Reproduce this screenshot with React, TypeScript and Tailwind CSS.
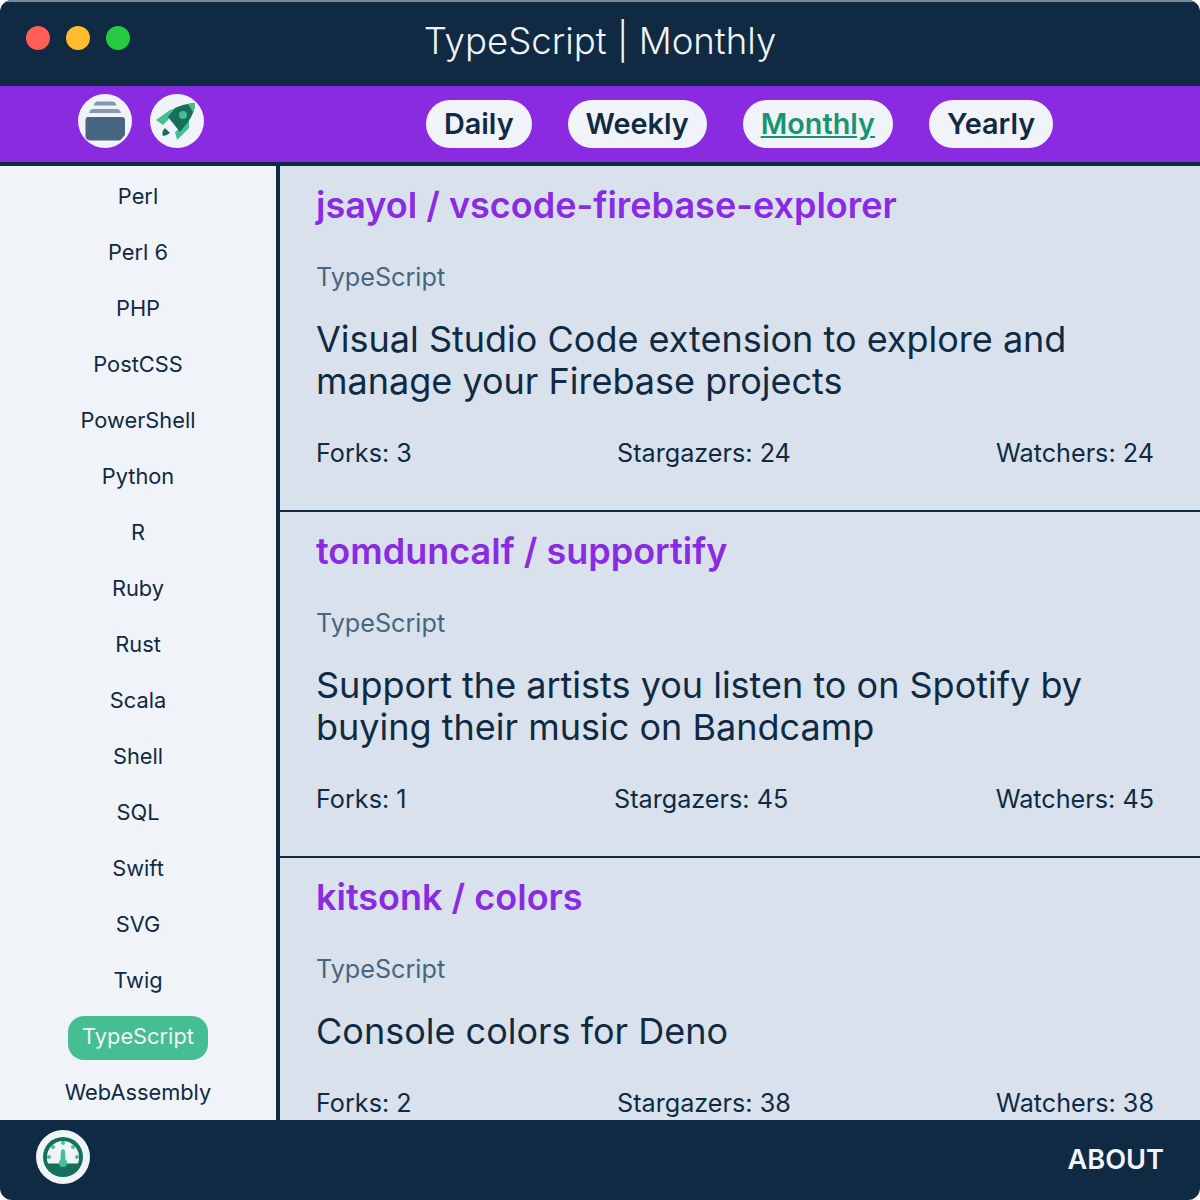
import React from 'react';

const languages = ['Perl', 'Perl 6', 'PHP', 'PostCSS', 'PowerShell', 'Python', 'R', 'Ruby', 'Rust', 'Scala', 'Shell', 'SQL', 'Swift', 'SVG', 'Twig', 'TypeScript', 'WebAssembly'];

const repos = [
  { name: 'jsayol / vscode-firebase-explorer', desc: 'Visual Studio Code extension to explore and manage your Firebase projects', forks: 3, stars: 24, watchers: 24 },
  { name: 'tomduncalf / supportify', desc: 'Support the artists you listen to on Spotify by buying their music on Bandcamp', forks: 1, stars: 45, watchers: 45 },
  { name: 'kitsonk / colors', desc: 'Console colors for Deno', forks: 2, stars: 38, watchers: 38 },
];

const periods = ['Daily', 'Weekly', 'Monthly', 'Yearly'];

function ArchiveIcon() {
  return (
    <svg width="54" height="54" viewBox="0 0 54 54">
      <circle cx="27" cy="27" r="27" fill="#F0F4F8" />
      <path d="M15.5 11.5 Q16.5 7.5 20 7.5 H34 Q37.5 7.5 38.5 11.5 Z" fill="#829AB1" />
      <path d="M11 19 Q12 15 15 15 H39 Q42 15 43 19 Z" fill="#829AB1" />
      <path d="M10 23 H44 Q47 23 47 26 V41 L42 46.5 H12 Q7.5 46 7.5 42 V26 Q7.5 23 10 23 Z" fill="#486581" />
    </svg>
  );
}

function RocketIcon() {
  return (
    <svg width="54" height="54" viewBox="0 0 54 54">
      <circle cx="27" cy="27" r="27" fill="#F0F4F8" />
      <path d="M6 26 L20 16 L27 14 L18 26 L13 31 Z" fill="#45BE93" />
      <path d="M39 26 L39 34 L27 46 L25 38 L31 33 Z" fill="#45BE93" />
      <path d="M18 23 L25 14 Q33 10 45 9 Q45 18 38 28 L30 38 Z" fill="#156F5B" />
      <path d="M38 10 Q42 9 45 9 Q45.5 12 43 18 Z" fill="#45BE93" />
      <circle cx="33" cy="21" r="4" fill="#45BE93" />
      <path d="M15 34 L20 39 Q16 42 13 42 Q11 38 15 34 Z" fill="#156F5B" />
    </svg>
  );
}

function GaugeIcon() {
  return (
    <svg width="54" height="54" viewBox="0 0 54 54">
      <circle cx="27" cy="27" r="27" fill="#F0F4F8" />
      <circle cx="27" cy="27" r="20" fill="#156F5B" />
      <path d="M12 33.5 Q10.5 30 11 27 A16 16 0 0 1 43 27 Q43.5 30 42 33.5 Z" fill="#F0F4F8" />
      <circle cx="27" cy="13" r="2" fill="#45BE93" />
      <circle cx="17" cy="17" r="2" fill="#45BE93" />
      <circle cx="37" cy="17" r="2" fill="#45BE93" />
      <circle cx="13" cy="27" r="2" fill="#45BE93" />
      <circle cx="41" cy="27" r="2" fill="#45BE93" />
      <path d="M25 21 Q27 17 29 21 L29.5 31 H24.5 Z" fill="#45BE93" />
      <circle cx="27" cy="33" r="4" fill="#45BE93" />
    </svg>
  );
}

export default function App() {
  return (
    <div className="h-[1200px] w-[1200px] overflow-hidden bg-white font-['Inter',sans-serif]">
      <div className="flex h-full flex-col overflow-hidden rounded-[12px] bg-[#102A43] text-[#102A43]">
        {/* Title bar */}
        <div className="relative flex h-[86px] shrink-0 items-start justify-center border-t-2 border-[#7b8794]">
          <div className="absolute left-[26px] top-[24px] flex gap-[16px]">
            <div className="h-[24px] w-[24px] rounded-full bg-[#FF5F57]" />
            <div className="h-[24px] w-[24px] rounded-full bg-[#FFBD2E]" />
            <div className="h-[24px] w-[24px] rounded-full bg-[#28CA42]" />
          </div>
          <h1 className="pt-[16px] text-[36.6px] font-light leading-[46px] text-[#F0F4F8]">TypeScript | Monthly</h1>
        </div>

        {/* Toolbar */}
        <div className="flex h-[76px] shrink-0 bg-[#8A2BE2]">
          <div className="flex w-[426px] shrink-0 gap-[18px] pl-[78px] pt-[8px]">
            <ArchiveIcon />
            <RocketIcon />
          </div>
          <div className="flex gap-[36px] pt-[14px]">
            {periods.map((p) => (
              <button
                key={p}
                className={`h-[48px] rounded-[24px] bg-[#F0F4F8] px-[18px] text-[28.8px] font-semibold leading-[48px] ${p === 'Monthly' ? 'text-[#199473] underline' : 'text-[#102A43]'}`}
              >
                {p}
              </button>
            ))}
          </div>
        </div>

        <div className="mt-[4px] flex min-h-0 flex-1">
          {/* Languages */}
          <div className="w-[276px] shrink-0 overflow-hidden bg-[#F0F4F8] pt-[10px]">
            <ul className="flex flex-col items-center gap-[12px]">
              {languages.map((l) => (
                <li
                  key={l}
                  className={`h-[44px] rounded-[16px] px-[14px] text-[21.8px] leading-[40px] ${l === 'TypeScript' ? 'bg-[#45BE93] text-[#F0F4F8]' : ''}`}
                >
                  {l}
                </li>
              ))}
            </ul>
          </div>

          {/* Repositories */}
          <div className="ml-[4px] min-w-0 flex-1 overflow-hidden bg-[#D9E2EC]">
            {repos.map((r) => (
              <div key={r.name} className="h-[346px] border-b-2 border-[#102A43] pl-[36px] pr-[46px]">
                <h2 className="pt-[16px] text-[36px] font-semibold leading-[46px] text-[#8A2BE2]">{r.name}</h2>
                <p className="mt-[33px] text-[25.2px] leading-[32px] text-[#486581]">TypeScript</p>
                <p className="mt-[25px] text-[36px] leading-[42px]">{r.desc}</p>
                <div className="mt-[35px] flex justify-between text-[25.2px] leading-[32px]">
                  <span>Forks: {r.forks}</span>
                  <span>Stargazers: {r.stars}</span>
                  <span>Watchers: {r.watchers}</span>
                </div>
              </div>
            ))}
          </div>
        </div>

        {/* Footer */}
        <div className="flex h-[80px] shrink-0 items-start justify-between pl-[36px] pr-[36px] pt-[10px]">
          <GaugeIcon />
          <button className="mt-[8px] text-[27.2px] font-semibold leading-[44px] text-[#F0F4F8]">ABOUT</button>
        </div>
      </div>
    </div>
  );
}
